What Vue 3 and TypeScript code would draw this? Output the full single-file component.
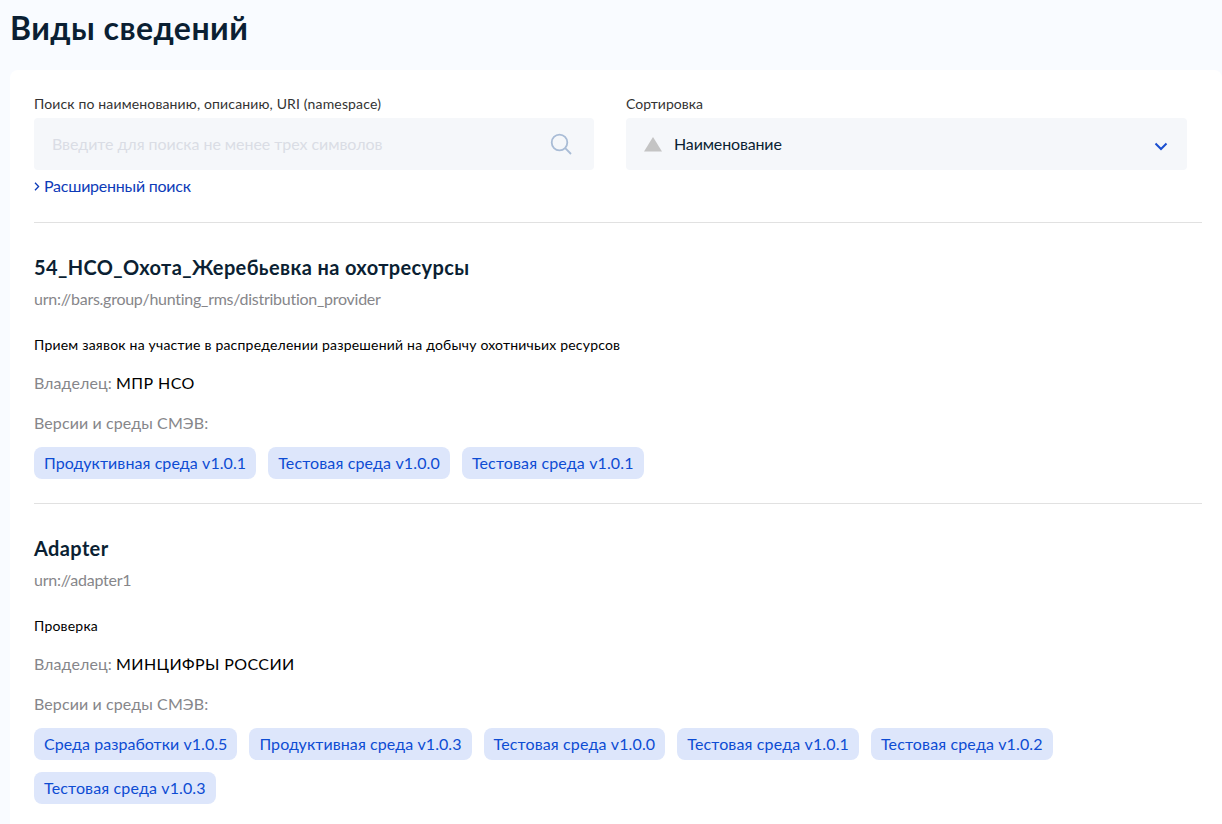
<script setup lang="ts">
interface Item {
  title: string;
  uri: string;
  description: string;
  owner: string;
  versions: string[];
}

const items: Item[] = [
  {
    title: "54_НСО_Охота_Жеребьевка на охотресурсы",
    uri: "urn://bars.group/hunting_rms/distribution_provider",
    description: "Прием заявок на участие в распределении разрешений на добычу охотничьих ресурсов",
    owner: "МПР НСО",
    versions: ["Продуктивная среда v1.0.1", "Тестовая среда v1.0.0", "Тестовая среда v1.0.1"],
  },
  {
    title: "Adapter",
    uri: "urn://adapter1",
    description: "Проверка",
    owner: "МИНЦИФРЫ РОССИИ",
    versions: [
      "Среда разработки v1.0.5",
      "Продуктивная среда v1.0.3",
      "Тестовая среда v1.0.0",
      "Тестовая среда v1.0.1",
      "Тестовая среда v1.0.2",
      "Тестовая среда v1.0.3",
    ],
  },
];

const envClass = (version: string) => {
  if (version.startsWith("Среда")) return "tag-dev";
  if (version.startsWith("Продуктивная")) return "tag-prod";
  return "tag-test";
};
</script>

<template>
  <div class="page">
    <h1 class="page-title">Виды сведений</h1>
    <div class="card">
      <div class="filters">
        <div class="field">
          <label class="field-label">Поиск по наименованию, описанию, URI (namespace)</label>
          <div class="control">
            <span class="placeholder">Введите для поиска не менее трех символов</span>
            <svg class="search-icon" width="24" height="24" viewBox="0 0 24 24" fill="none">
              <circle cx="10.5" cy="10.5" r="7.8" stroke="#a9bcd6" stroke-width="1.8" />
              <path d="M16.2 16.2 22 22" stroke="#a9bcd6" stroke-width="1.8" />
            </svg>
          </div>
          <a class="advanced">
            <svg width="6" height="9" viewBox="0 0 6 9" fill="none">
              <path d="M1 .8 4.6 4.5 1 8.2" stroke="#0d3bb8" stroke-width="1.3" />
            </svg>
            Расширенный поиск
          </a>
        </div>
        <div class="field">
          <label class="field-label sort-label">Сортировка</label>
          <div class="control">
            <svg class="sort-icon" width="18" height="16" viewBox="0 0 18 16">
              <path d="M9 1 18 15.500H0Z" fill="#c4c4c4" />
            </svg>
            <span class="sort-value">Наименование</span>
            <svg class="chevron" width="14" height="9" viewBox="0 0 14 9" fill="none">
              <path d="M1.500 1.500 7 7 12.500 1.500" stroke="#1a4fd0" stroke-width="2" />
            </svg>
          </div>
        </div>
      </div>

      <section v-for="item in items" :key="item.uri" class="item">
        <h2 class="item-title">{{ item.title }}</h2>
        <div class="item-uri">{{ item.uri }}</div>
        <p class="item-desc">{{ item.description }}</p>
        <div class="item-owner">Владелец: <span>{{ item.owner }}</span></div>
        <div class="item-versions-label">Версии и среды СМЭВ:</div>
        <div class="tags">
          <a v-for="version in item.versions" :key="version" class="tag" :class="envClass(version)">{{ version }}</a>
        </div>
      </section>
    </div>
  </div>
</template>

<style>
html,
body {
  margin: 0;
  background: #f9fbff;
}
</style>

<style scoped>
.page {
  height: 824px;
  overflow: hidden;
  box-sizing: border-box;
  padding-left: 10px;
  font-family: Lato, "Noto Sans", sans-serif;
  background: #f9fbff;
}
.page-title {
  margin: 0;
  height: 70px;
  padding-top: 8px;
  box-sizing: border-box;
  font-size: 32px;
  line-height: 40px;
  font-weight: 700;
  letter-spacing: 0.46px;
  color: #0b1f33;
}
.card {
  background: #fff;
  border-radius: 8px 8px 0 0;
  padding: 24px 20px 0 24px;
  min-height: 754px;
}
.filters {
  display: grid;
  grid-template-columns: 560px 561px;
  column-gap: 32px;
  height: 128px;
  border-bottom: 1px solid #e1e1e1;
}
.field-label {
  display: block;
  font-size: 14px;
  line-height: 20px;
  letter-spacing: 0.15px;
  color: #333;
  margin-bottom: 4px;
}
.sort-label {
  letter-spacing: 0;
}
.control {
  display: flex;
  align-items: center;
  height: 52px;
  border-radius: 4px;
  background: #f5f7fa;
  padding: 0 18px;
  box-sizing: border-box;
}
.placeholder {
  flex: 1;
  margin-top: -2px;
  font-size: 16px;
  letter-spacing: -0.05px;
  color: #dadde5;
}
.search-icon {
  margin-right: 3px;
}
.sort-value {
  flex: 1;
  margin-top: -2px;
  margin-left: 12px;
  font-size: 16px;
  letter-spacing: -0.15px;
  color: #0b1f33;
}
.chevron {
  margin-right: 1px;
  margin-top: 5px;
}
.advanced {
  display: flex;
  align-items: center;
  gap: 4px;
  margin-top: 6px;
  font-size: 16px;
  line-height: 20px;
  letter-spacing: -0.24px;
  color: #0d3bb8;
}
.item {
  padding: 31px 0 24px;
  border-bottom: 1px solid #e1e1e1;
}
.item-title {
  margin: 0;
  font-size: 20px;
  line-height: 26px;
  font-weight: 700;
  letter-spacing: 0.37px;
  color: #0b1f33;
}
.item-uri {
  margin-top: 8px;
  font-size: 16px;
  line-height: 22px;
  letter-spacing: -0.26px;
  color: #86868a;
}
.item-desc {
  margin: 25px 0 0;
  font-size: 14px;
  line-height: 20px;
  letter-spacing: 0.21px;
  color: #000;
}
.item-owner {
  margin-top: 17px;
  font-size: 16px;
  line-height: 22px;
  letter-spacing: 0.1px;
  color: #86868a;
}
.item-owner span {
  letter-spacing: 0.4px;
  color: #000;
}
.item-versions-label {
  margin-top: 18px;
  font-size: 16px;
  line-height: 22px;
  letter-spacing: 0.1px;
  color: #86868a;
}
.tags {
  display: flex;
  flex-wrap: wrap;
  gap: 12px;
  margin-top: 13px;
}
.tag {
  height: 32px;
  padding: 0 10px;
  border-radius: 8px;
  background: #dde6fb;
  font-size: 16px;
  line-height: 32px;
  color: #0d4cd3;
}
.tag-dev {
  letter-spacing: 0.045px;
}
.tag-prod {
  letter-spacing: 0.08px;
}
.tag-test {
  letter-spacing: 0.135px;
}
</style>
